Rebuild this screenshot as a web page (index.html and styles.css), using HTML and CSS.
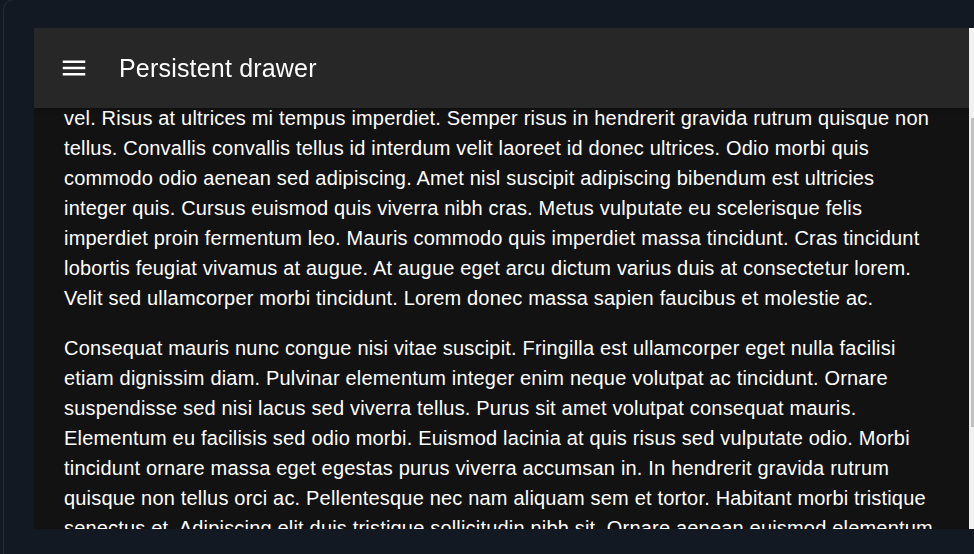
FILE: index.html
```html
<!DOCTYPE html>
<html lang="en">
<head>
<meta charset="utf-8">
<title>Persistent drawer</title>
<link rel="stylesheet" href="styles.css">
</head>
<body>
<div class="window">
  <div class="frame">
    <div class="viewport" id="viewport">
      <header class="appbar">
        <button class="menu-btn" aria-label="open drawer">
          <svg viewBox="0 0 24 24" width="30" height="30" aria-hidden="true"><path fill="currentColor" d="M3 18h18v-2H3v2zm0-5h18v-2H3v2zm0-7v2h18V6H3z"/></svg>
        </button>
        <h1 class="title">Persistent drawer</h1>
      </header>
      <main class="main">
        <p class="para">Lorem ipsum dolor sit amet, consectetur adipiscing elit, sed do eiusmod tempor incididunt ut labore et dolore magna aliqua. Rhoncus dolor purus non enim praesent elementum facilisis leo vel. Risus at ultrices mi tempus imperdiet. Semper risus in hendrerit gravida rutrum quisque non tellus. Convallis convallis tellus id interdum velit laoreet id donec ultrices. Odio morbi quis commodo odio aenean sed adipiscing. Amet nisl suscipit adipiscing bibendum est ultricies integer quis. Cursus euismod quis viverra nibh cras. Metus vulputate eu scelerisque felis imperdiet proin fermentum leo. Mauris commodo quis imperdiet massa tincidunt. Cras tincidunt lobortis feugiat vivamus at augue. At augue eget arcu dictum varius duis at consectetur lorem. Velit sed ullamcorper morbi tincidunt. Lorem donec massa sapien faucibus et molestie ac.</p>
        <p class="para">Consequat mauris nunc congue nisi vitae suscipit. Fringilla est ullamcorper eget nulla facilisi etiam dignissim diam. Pulvinar elementum integer enim neque volutpat ac tincidunt. Ornare suspendisse sed nisi lacus sed viverra tellus. Purus sit amet volutpat consequat mauris. Elementum eu facilisis sed odio morbi. Euismod lacinia at quis risus sed vulputate odio. Morbi tincidunt ornare massa eget egestas purus viverra accumsan in. In hendrerit gravida rutrum quisque non tellus orci ac. Pellentesque nec nam aliquam sem et tortor. Habitant morbi tristique senectus et. Adipiscing elit duis tristique sollicitudin nibh sit. Ornare aenean euismod elementum nisi quis eleifend. Commodo viverra maecenas accumsan lacus vel facilisis. Nulla posuere sollicitudin aliquam ultrices sagittis orci a.</p>
      </main>
    </div>
    <div class="scrollbar">
      <div class="thumb" style="margin-top:90px;height:309px"></div>
    </div>
  </div>
</div>
<script src="script.js"></script>
</body>
</html>
```

FILE: styles.css
```css
html, body {
  margin: 0;
  padding: 0;
  height: 100%;
  overflow: hidden;
  background: #131922;
}

.window {
  margin: -1px 0 0 3px;
  width: 1000px;
  height: 620px;
  border: 1px solid #232b37;
  border-radius: 11px;
  padding: 28px 0 0 30px;
  box-sizing: border-box;
  background: #131922;
}

.frame {
  display: flex;
  width: 952px;
  height: 501px;
}

.viewport {
  flex: 1 1 auto;
  height: 501px;
  overflow: hidden;
  background: #121212;
  font-family: "Liberation Sans", Arial, sans-serif;
  color: #fff;
}

.appbar {
  position: sticky;
  top: 0;
  z-index: 2;
  display: flex;
  align-items: center;
  height: 80px;
  padding: 0 30px 0 25px;
  background: #272727;
  box-shadow: 0 2px 5px rgba(0, 0, 0, 0.2);
}

.menu-btn {
  display: flex;
  align-items: center;
  justify-content: center;
  width: 30px;
  height: 30px;
  padding: 0;
  margin: 0 30px 0 0;
  border: 0;
  background: transparent;
  color: #fff;
}

.menu-btn svg {
  display: block;
}

.title {
  margin: 0;
  font-size: 25px;
  font-weight: 500;
  line-height: 1.6;
  letter-spacing: 0.0075em;
}

.main {
  padding: 30px;
}

.para {
  margin: 0 0 20px;
  font-size: 20px;
  line-height: 1.5;
  letter-spacing: 0.00938em;
}

.scrollbar {
  flex: 0 0 17px;
  width: 17px;
  height: 501px;
  background: #f1f1f1;
}

.thumb {
  width: 13px;
  margin-left: 2px;
  background: #c1c1c1;
}
```

FILE: script.js
```js
document.getElementById('viewport').scrollTop = 95;
```
